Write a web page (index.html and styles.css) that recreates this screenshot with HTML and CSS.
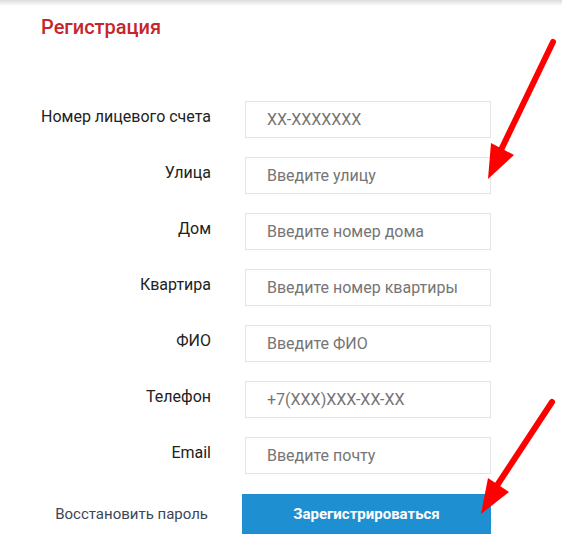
FILE: index.html
```html
<!DOCTYPE html>
<html>
<head>
    <meta charset="UTF-8">
    <title>Регистрация</title>
    <link rel="stylesheet" href="styles.css">
</head>
<body>
<div class="top-shadow"></div>
<div class="register-container">
    <h1 class="register-header">Регистрация</h1>
    <form class="register-form">
        <div class="form-row">
            <label for="account">Номер лицевого счета</label>
            <input type="text" id="account" placeholder="XX-XXXXXXX">
        </div>
        <div class="form-row">
            <label for="street">Улица</label>
            <input type="text" id="street" placeholder="Введите улицу">
        </div>
        <div class="form-row">
            <label for="house">Дом</label>
            <input type="text" id="house" placeholder="Введите номер дома">
        </div>
        <div class="form-row">
            <label for="flat">Квартира</label>
            <input type="text" id="flat" placeholder="Введите номер квартиры">
        </div>
        <div class="form-row">
            <label for="fio">ФИО</label>
            <input type="text" id="fio" placeholder="Введите ФИО">
        </div>
        <div class="form-row">
            <label for="phone">Телефон</label>
            <input type="text" id="phone" placeholder="+7(XXX)XXX-XX-XX">
        </div>
        <div class="form-row">
            <label for="email">Email</label>
            <input type="text" id="email" placeholder="Введите почту">
        </div>
        <div class="button-row">
            <a class="restore-link" href="#">Восстановить пароль</a>
            <button class="register-button" type="button">Зарегистрироваться</button>
        </div>
    </form>
</div>
<!-- Red arrows drawn over the form -->
<svg class="arrows" width="562" height="560" viewBox="0 0 562 560">
    <line x1="553" y1="42" x2="500" y2="152" stroke="#f00" stroke-width="6" stroke-linecap="round"/>
    <polygon points="488,179 491,143 514,155" fill="#f00"/>
    <line x1="552" y1="402" x2="496" y2="487" stroke="#f00" stroke-width="6" stroke-linecap="round"/>
    <polygon points="481,514 488,478 509,492" fill="#f00"/>
</svg>
</body>
</html>
```
FILE: styles.css
```css
/* Body styling */
body {
    font-family: Roboto, "Liberation Sans", sans-serif;
    background-color: #fff;
    margin: 0;
    padding: 0;
    position: relative;
    height: 560px;
    overflow: hidden;
}

/* Shadow at the top edge */
.top-shadow {
    height: 6px;
    background: linear-gradient(#dcdcdc, #fff);
}

.register-container {
    padding: 10px 0 0 41px;
}

/* Header */
.register-header {
    color: #c4262b;
    font-size: 20px;
    font-weight: 500;
    margin: 0 0 63px 0;
    line-height: 22px;
}

/* Form rows */
.form-row {
    display: flex;
    align-items: flex-start;
    margin-bottom: 19px;
}

.form-row label {
    width: 170px;
    text-align: right;
    font-size: 16px;
    line-height: 19px;
    color: #222;
    padding-top: 6px;
    margin-right: 34px;
}

.form-row input[type="text"] {
    width: 246px;
    height: 37px;
    box-sizing: border-box;
    border: 1px solid #e4e4e4;
    padding: 0 0 0 21px;
    font-family: Roboto, "Liberation Sans", sans-serif;
    font-size: 16px;
    color: #333;
    margin: 0;
}

.form-row input::placeholder {
    color: #757575;
}

/* Bottom row */
.button-row {
    display: flex;
    align-items: center;
    padding-top: 1px;
}

.restore-link {
    width: 167px;
    text-align: right;
    font-size: 15px;
    color: #3b4756;
    text-decoration: none;
    margin-right: 34px;
}

.register-button {
    width: 249px;
    height: 40px;
    background-color: #1e8fd0;
    color: #fff;
    border: none;
    font-family: Roboto, "Liberation Sans", sans-serif;
    font-size: 15px;
    font-weight: 700;
    cursor: pointer;
}

/* Arrows overlay */
.arrows {
    position: absolute;
    top: 0;
    left: 0;
}
```
